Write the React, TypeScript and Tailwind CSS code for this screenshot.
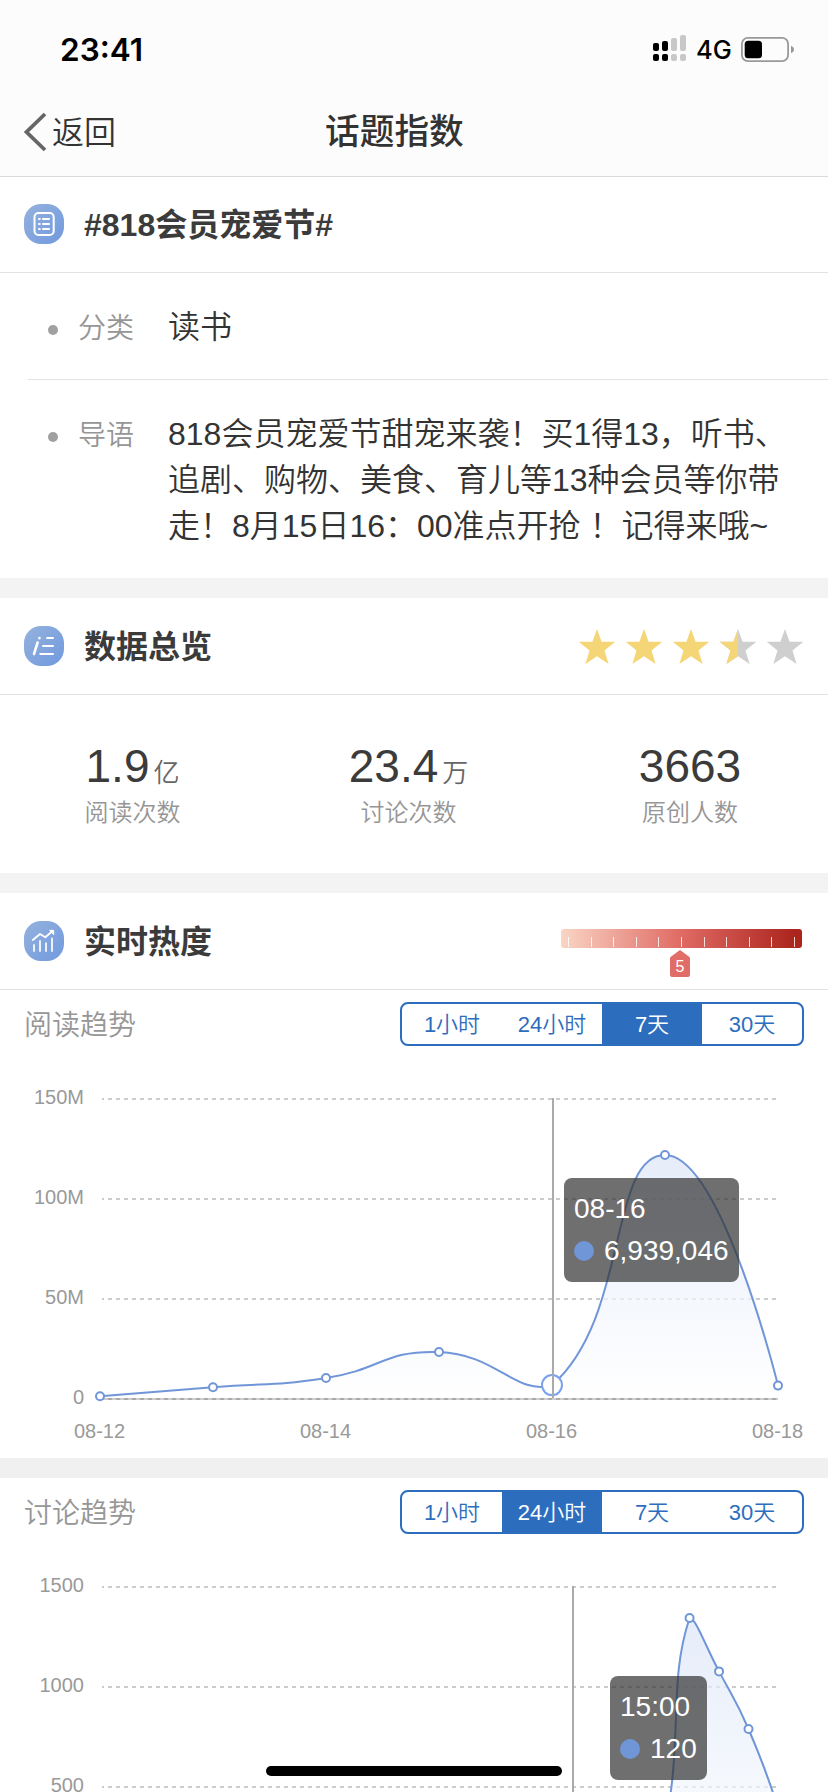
import { ReactNode, useState } from "react";

type Point = { x: number; y: number };

type TrendProps = {
  title: string;
  id: string;
  defaultRange: string;
  values: number[];
  max: number;
  yLabels: string[];
  xLabels: { index: number; text: string }[];
  activeIndex: number;
  height: number;
  children: ReactNode;
};

const RANGES = ["1小时", "24小时", "7天", "30天"];

const LEFT = 100;
const RIGHT = 778;
const TOP = 53;
const BOTTOM = 353;

const readValues = [
  1400000, 5900000, 10500000, 23500000, 6939046, 122000000, 6700000,
];

const discussValues = [
  60, 40, 30, 20, 15, 12, 18, 30, 45, 60, 70, 80, 95, 90, 100, 110, 120, 130,
  150, 190, 1345, 1078, 790, 395,
];

const App = () => {
  return (
    <div className="relative flex h-[1792px] w-[828px] flex-col overflow-hidden bg-white font-['Liberation_Sans','Noto_Sans_CJK_SC',sans-serif] text-[#333]">
      <Header />

      <SectionTitle icon={<ListIcon />} text="#818会员宠爱节#" />
      <section className="flex flex-col pl-7">
        <div className="flex h-[107px] border-b border-[#e2e2e2] pt-[31px]">
          <InfoLabel text="分类" />
          <p className="text-[32px] font-[350] leading-[46px]">读书</p>
        </div>
        <div className="flex h-[198px] pt-[31px]">
          <InfoLabel text="导语" />
          <p className="whitespace-nowrap text-[32px] font-[350] leading-[46px]">
            818会员宠爱节甜宠来袭！买1得13，听书、
            <br />
            追剧、购物、美食、育儿等13种会员等你带
            <br />
            走！8月15日16：00准点开抢 ！记得来哦~
          </p>
        </div>
      </section>

      <Divider />

      <SectionTitle icon={<OverviewIcon />} text="数据总览">
        <div className="mr-[25px] flex gap-[11px]">
          <Star fill={1} />
          <Star fill={1} />
          <Star fill={1} />
          <Star fill={0.5} />
          <Star fill={0} />
        </div>
      </SectionTitle>
      <section className="grid h-[178px] shrink-0 grid-cols-[265px_287px_276px] pt-[43px]">
        <Stat value="1.9" unit="亿" label="阅读次数" />
        <Stat value="23.4" unit="万" label="讨论次数" />
        <Stat value="3663" label="原创人数" />
      </section>

      <Divider />

      <SectionTitle icon={<HeatIcon />} text="实时热度">
        <HeatScale level={5} />
      </SectionTitle>

      <Trend
        title="阅读趋势"
        id="read"
        defaultRange="7天"
        values={readValues}
        max={150000000}
        yLabels={["150M", "100M", "50M", "0"]}
        xLabels={[
          { index: 0, text: "08-12" },
          { index: 2, text: "08-14" },
          { index: 4, text: "08-16" },
          { index: 6, text: "08-18" },
        ]}
        activeIndex={4}
        height={412}
      >
        <div className="absolute left-[564px] top-[132px]">
          <Tooltip title="08-16" value="6,939,046" />
        </div>
      </Trend>

      <div className="h-5 shrink-0 bg-[#f0f0f0]" />

      <Trend
        title="讨论趋势"
        id="discuss"
        defaultRange="24小时"
        values={discussValues}
        max={1500}
        yLabels={["1500", "1000", "500"]}
        xLabels={[]}
        activeIndex={16}
        height={412}
      >
        <div className="absolute left-[610px] top-[142px]">
          <Tooltip title="15:00" value="120" />
        </div>
      </Trend>

      {/* home indicator */}
      <div className="absolute bottom-4 left-[266px] h-[10px] w-[296px] rounded-full bg-black" />
    </div>
  );
};

const Header = () => {
  return (
    <header className="h-[177px] shrink-0 border-b border-[#dadada] bg-[#fcfcfc]">
      <div className="flex h-[88px] items-start justify-between pl-[60px] pr-[34px] pt-[31px]">
        <span className="font-[Inter] text-[31.5px] font-semibold leading-[38px] text-black">
          23:41
        </span>
        <div className="flex items-start gap-[10px]">
          <svg className="mt-1" width="33" height="26" viewBox="0 0 33 26">
            <rect x="0" y="8" width="6" height="8" rx="2" />
            <rect x="9" y="6" width="6" height="10" rx="2" />
            <rect x="0" y="19" width="6" height="7" rx="2" />
            <rect x="9" y="19" width="6" height="7" rx="2" />
            <g fill="#c8c8c8">
              <rect x="18" y="3" width="6" height="13" rx="2" />
              <rect x="27" y="0" width="6" height="16" rx="2" />
              <rect x="18" y="19" width="6" height="7" rx="2" />
              <rect x="27" y="19" width="6" height="7" rx="2" />
            </g>
          </svg>
          <span className="w-[35px] whitespace-nowrap font-[Inter] text-[25.5px] font-medium leading-[38px] text-black">
            4G
          </span>
          <svg className="mt-[6px]" width="53" height="25" viewBox="0 0 53 25">
            <rect
              x="0.9"
              y="0.9"
              width="46.2"
              height="23.2"
              rx="6"
              fill="none"
              stroke="#999"
              strokeWidth="1.8"
            />
            <rect x="3.7" y="3.8" width="17.3" height="17.4" rx="3.5" />
            <path d="M50 8.8c1.800.7 3 2 3 3.700s-1.200 3-3 3.700z" fill="#999" />
          </svg>
        </div>
      </div>
      <div className="grid h-[88px] grid-cols-[325px_1fr] items-center pl-6">
        <button className="flex items-center gap-[5px]">
          <svg width="23" height="40" viewBox="0 0 23 40" fill="none">
            <path d="M21 2 2.500 20 21 38" stroke="#666" strokeWidth="3.800" />
          </svg>
          <span className="pt-[2px] text-[32px] font-[350] leading-[46px]">
            返回
          </span>
        </button>
        <h1 className="-ml-6 text-[34.700px] font-medium leading-[50px]">
          话题指数
        </h1>
      </div>
    </header>
  );
};

const SectionTitle = ({
  icon,
  text,
  children,
}: {
  icon: ReactNode;
  text: string;
  children?: ReactNode;
}) => {
  return (
    <div className="flex h-[97px] shrink-0 items-center border-b border-[#e2e2e2] pl-6 first-of-type:h-24 first-of-type:pb-px">
      {icon}
      <h2 className="ml-5 flex-1 pt-px text-[32px] font-bold leading-[46px] text-[#3b3b3b]">
        {text}
      </h2>
      {children}
    </div>
  );
};

const Divider = () => <div className="h-5 shrink-0 bg-[#f3f3f3]" />;

const InfoLabel = ({ text }: { text: string }) => {
  return (
    <div className="flex h-12 w-[140px] items-center pl-5">
      <span className="mt-1 h-[10px] w-[10px] rounded-full bg-[#a0a0a0]" />
      <span className="ml-5 pt-[2px] text-[28px] font-[350] leading-10 text-[#969696]">
        {text}
      </span>
    </div>
  );
};

const Stat = ({
  value,
  unit,
  label,
}: {
  value: string;
  unit?: string;
  label: string;
}) => {
  return (
    <div className="flex flex-col items-center">
      <p className="flex h-14 items-baseline text-[46px] leading-[56px] text-[#3b3b3b]">
        {value}
        {unit && (
          <span className="ml-1 text-[26px] font-[350] text-[#666]">{unit}</span>
        )}
      </p>
      <p className="pt-px text-2xl font-[350] leading-9 text-[#969696]">
        {label}
      </p>
    </div>
  );
};

const Star = ({ fill }: { fill: number }) => {
  return (
    <svg className="h-[35px] w-9 overflow-visible" viewBox="0 0 36 35">
      <polygon
        points="18,0 22.600,12.700 36.300,12.800 25.500,21.600 29.600,35 18,27.200 6.400,35 10.500,21.600 -0.300,12.800 13.400,12.700"
        fill={fill === 1 ? "#f5d677" : "#cfcfcf"}
      />
      {fill === 0.5 && (
        <polygon
          points="18,0 18,27.200 6.400,35 10.500,21.600 -0.300,12.800 13.400,12.700"
          fill="#f5d677"
        />
      )}
    </svg>
  );
};

const HeatScale = ({ level }: { level: number }) => {
  return (
    <div className="mr-[26px] mt-6 flex w-[241px] flex-col">
      <div className="flex h-[19px] items-end justify-between rounded-[3px] bg-[linear-gradient(90deg,#f9d5c4,#e06a64_50%,#ab251d_97%)] px-[7px]">
        {Array.from({ length: 11 }, (_, i) => (
          <span key={i} className="mb-px h-[10px] w-px bg-white/80" />
        ))}
      </div>
      <div className="relative ml-[109px] mt-[2px] h-[27px] w-5">
        <svg width="20" height="27" viewBox="0 0 20 27">
          <path
            d="M10 0 19.200 6.800Q20 7.500 20 8.500V25a2 2 0 0 1-2 2H2a2 2 0 0 1-2-2V8.500Q0 7.500.800 6.800z"
            fill="#e06d68"
          />
        </svg>
        <span className="absolute inset-x-0 top-[7px] text-center text-base leading-5 text-white">
          {level}
        </span>
      </div>
    </div>
  );
};

const Tooltip = ({ title, value }: { title: string; value: string }) => {
  return (
    <div className="rounded-lg bg-[rgba(50,50,50,0.7)] p-[10px] text-[28px] leading-[42px] text-white">
      <p>{title}</p>
      <p className="flex items-center gap-[10px]">
        <span className="h-5 w-5 rounded-full bg-[#7096d8]" />
        {value}
      </p>
    </div>
  );
};

const smoothPath = (pts: Point[], smooth = 0.5) => {
  const minY = Math.min(...pts.map((p) => p.y));
  const maxY = Math.max(...pts.map((p) => p.y));
  const clamp = (y: number) => Math.min(maxY, Math.max(minY, y));
  const dist = (a: Point, b: Point) => Math.hypot(a.x - b.x, a.y - b.y);

  let d = `M${pts[0].x} ${pts[0].y}`;
  let out = pts[0];
  for (let i = 1; i < pts.length; i++) {
    const prev = pts[i - 1];
    const p = pts[i];
    const next = pts[i + 1];
    let cp = p;
    let nextOut = p;
    if (next) {
      const ratio = dist(p, next) / (dist(p, next) + dist(prev, p));
      const vx = (next.x - prev.x) * smooth;
      const vy = (next.y - prev.y) * smooth;
      cp = { x: p.x - vx * (1 - ratio), y: clamp(p.y - vy * (1 - ratio)) };
      nextOut = { x: p.x + vx * ratio, y: clamp(p.y + vy * ratio) };
    }
    d += `C${out.x} ${out.y} ${cp.x} ${cp.y} ${p.x} ${p.y}`;
    out = nextOut;
  }
  return d;
};

const Trend = ({
  title,
  id,
  defaultRange,
  values,
  max,
  yLabels,
  xLabels,
  activeIndex,
  height,
  children,
}: TrendProps) => {
  const [range, setRange] = useState<string>(defaultRange);

  const step = (RIGHT - LEFT) / (values.length - 1);
  const pts = values.map((v, i) => ({
    x: LEFT + i * step,
    y: BOTTOM - (v / max) * (BOTTOM - TOP),
  }));
  const line = smoothPath(pts);
  const active = pts[activeIndex];
  const cursorX = Math.round(active.x) + 1;

  return (
    <section className="shrink-0">
      <div className="flex items-center justify-between pl-6 pr-6 pt-3">
        <h3 className="pt-[3px] text-[28px] font-[350] leading-10 text-[#969696]">
          {title}
        </h3>
        <div className="flex h-11 w-[404px] overflow-hidden rounded-lg border-2 border-[#2d6dbd]">
          {RANGES.map((item) => (
            <button
              key={item}
              onClick={() => setRange(item)}
              className={
                item === range
                  ? "flex-1 bg-[#2d6dbd] text-[22px] font-[350] text-white"
                  : "flex-1 text-[22px] font-[350] text-[#2d6dbd]"
              }
            >
              {item}
            </button>
          ))}
        </div>
      </div>
      <div className="relative">
        <svg
          className="block"
          width="828"
          height={height}
          viewBox={`0 0 828 ${height}`}
          fontSize="20"
          fill="#999"
        >
          <defs>
            <linearGradient id={id} x1="0" y1="0" x2="0" y2="1">
              <stop offset="0" stopColor="#dbe5f7" />
              <stop offset="1" stopColor="#ffffff" />
            </linearGradient>
          </defs>
          <line x1={LEFT} x2={RIGHT} y1={BOTTOM} y2={BOTTOM} stroke="#ccc" strokeWidth="2" />
          {yLabels.map((label, i) => (
            <g key={label}>
              <text x="84" y={TOP + i * 100 + 5} textAnchor="end">
                {label}
              </text>
              <line
                x1="102"
                x2="777"
                y1={TOP + i * 100}
                y2={TOP + i * 100}
                stroke={i === 3 ? "#aaa" : "#ccc"}
                strokeWidth="2"
                strokeDasharray="4 4"
                strokeDashoffset="2"
              />
            </g>
          ))}
          {xLabels.map((l) => (
            <text key={l.text} x={pts[l.index].x - 0.5} y="392" textAnchor="middle">
              {l.text}
            </text>
          ))}
          <path
            d={`${line}L${RIGHT} ${BOTTOM - 1}L${LEFT} ${BOTTOM - 1}Z`}
            fill={`url(#${id})`}
            opacity="0.7"
          />
          <path d={line} fill="none" stroke="#7096d8" strokeWidth="2" />
          {pts.map((p, i) => (
            <circle
              key={i}
              cx={p.x}
              cy={p.y}
              r={i === activeIndex ? 10 : 4}
              fill="#fff"
              stroke={i === activeIndex ? "#7aa2ee" : "#7096d8"}
              strokeWidth="2"
            />
          ))}
          <line x1={cursorX} x2={cursorX} y1={TOP - 1} y2={BOTTOM - 1} stroke="#aaa" strokeWidth="2" />
        </svg>
        {children}
      </div>
    </section>
  );
};

const IconTile = ({ id, children }: { id: string; children: ReactNode }) => {
  return (
    <svg
      width="40"
      height="40"
      viewBox="0 0 40 40"
      fill="none"
      stroke="#fff"
      strokeWidth="2"
      strokeLinecap="round"
      strokeLinejoin="round"
    >
      <defs>
        <linearGradient id={id} x1="0" y1="0" x2="1" y2="1">
          <stop offset="0" stopColor="#94b2dc" />
          <stop offset="1" stopColor="#7199df" />
        </linearGradient>
      </defs>
      <rect width="40" height="40" rx="17" fill={`url(#${id})`} stroke="none" />
      {children}
    </svg>
  );
};

const ListIcon = () => (
  <IconTile id="tile-list">
    <rect x="10.500" y="9" width="19.200" height="22" rx="4" />
    <path d="M15 15h.8M15 20h.8M15 25h.8M19 15h6M19 20h6M19 25h6" />
  </IconTile>
);

const OverviewIcon = () => (
  <IconTile id="tile-overview">
    <path d="M23 12h6M19 20h10M16.300 28h12.700" />
    <path d="M13.600 16.500 10 28M15.400 12v.3" strokeWidth="2.600" />
  </IconTile>
);

const HeatIcon = () => (
  <IconTile id="tile-heat">
    <path d="M10 24v6M16 20v10M22 22.300v7.700M28 17.500v12.500" opacity="0.85" />
    <path d="M8.800 19 16 13l5.300 3.300L28 10.500" strokeWidth="1.800" />
    <path d="M26 9.300h3.700v4z" fill="#fff" strokeWidth="1" />
  </IconTile>
);

export default App;
